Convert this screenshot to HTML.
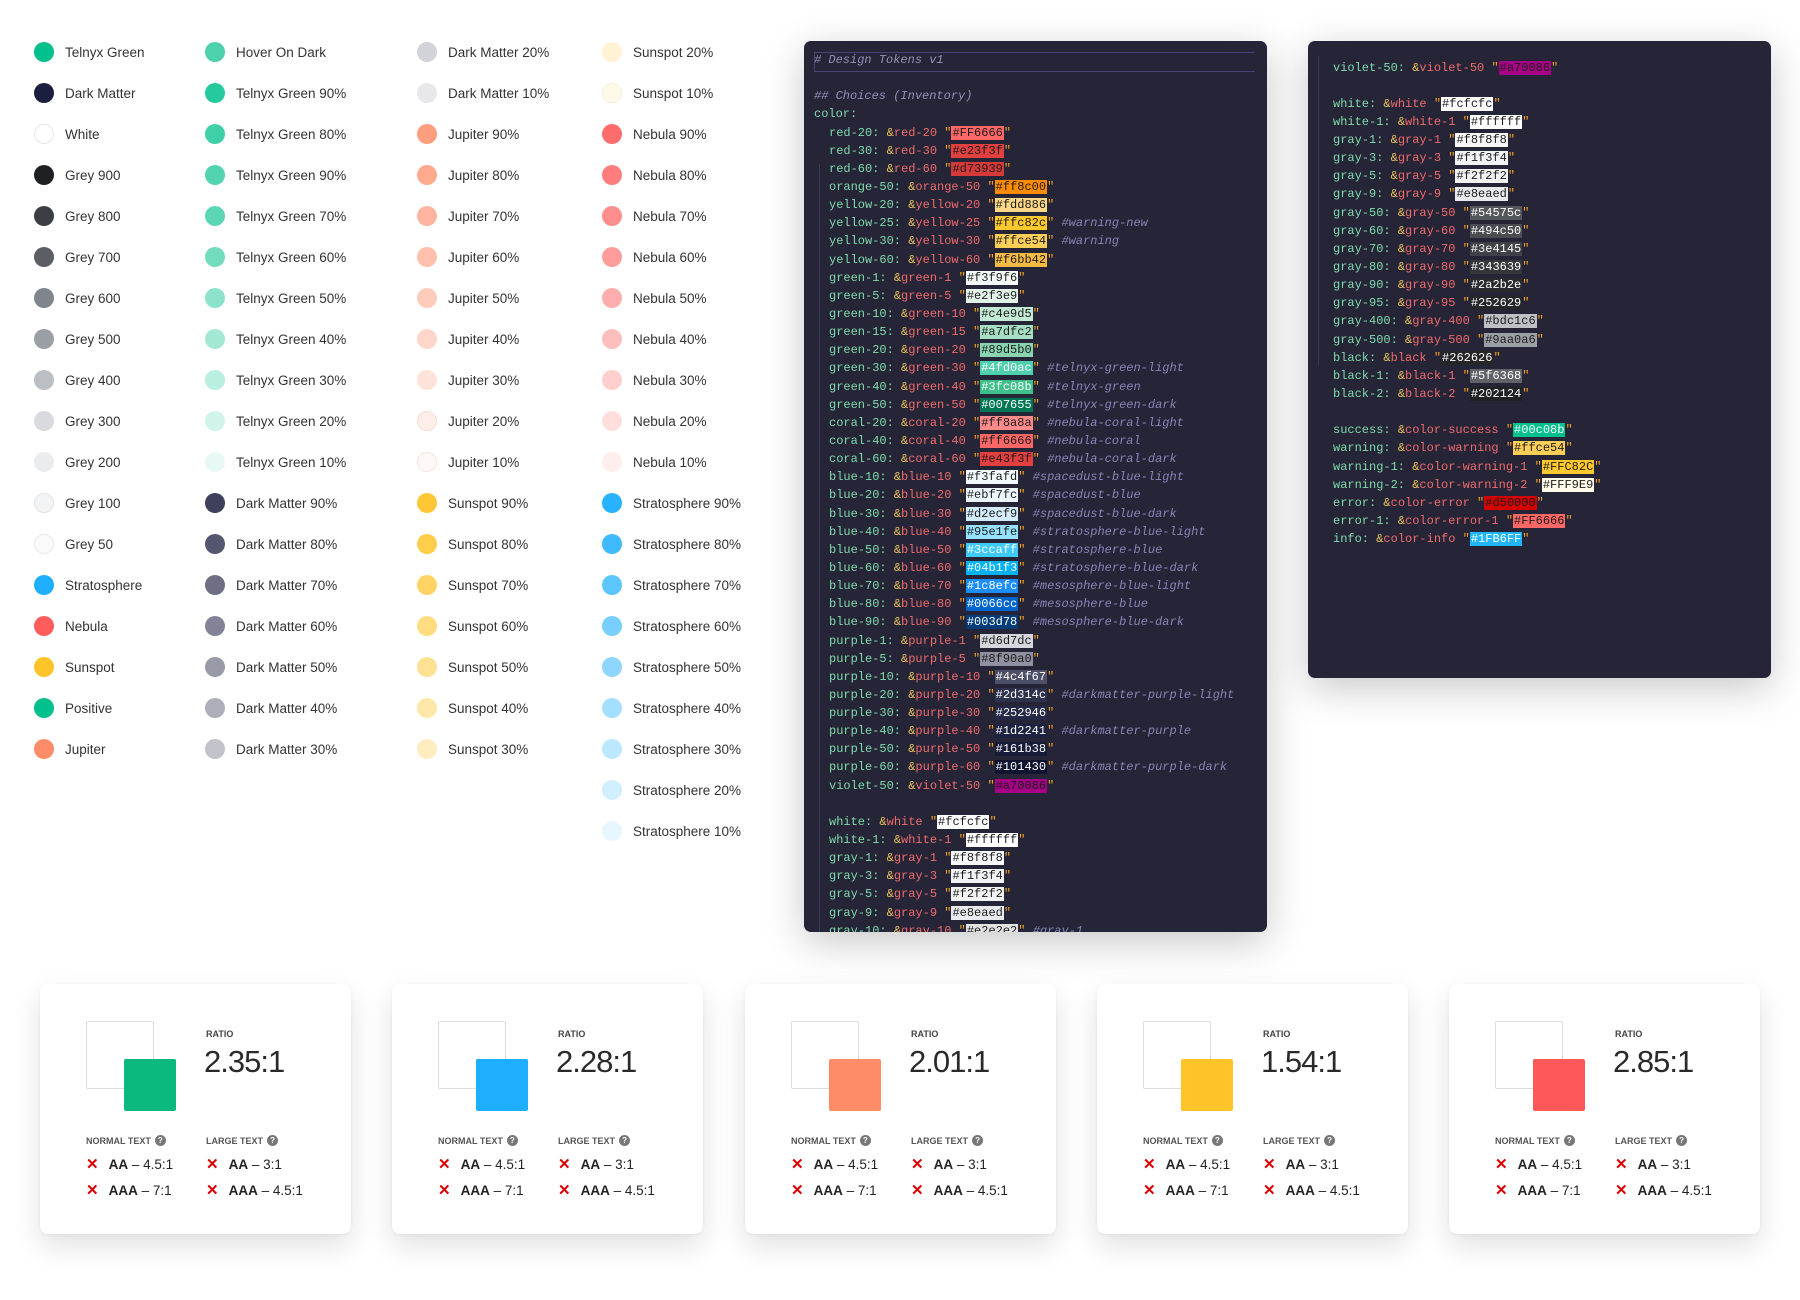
<!DOCTYPE html>
<html><head><meta charset="utf-8"><style>
*{margin:0;padding:0;box-sizing:border-box}
body{width:1800px;height:1300px;background:#fff;position:relative;overflow:hidden;font-family:"Liberation Sans",sans-serif}
.sw{position:absolute;height:20px;display:flex;align-items:center;font-size:13.5px;color:#333;white-space:nowrap}
.sw i{display:inline-block;width:20px;height:20px;border-radius:50%;margin-right:11px;flex:none}
.panel{position:absolute;background:#262437;border-radius:7px;box-shadow:0 10px 40px rgba(0,0,0,.22);overflow:hidden;font-family:"Liberation Mono",monospace;font-size:12px;line-height:18.15px;color:#7ddcab;white-space:nowrap}
.l{height:18.15px}
.k{color:#7ddcab}.a{color:#e8c25a}.n{color:#f06b6b}.q{color:#f5a623}
.h{color:#1c1c1c;padding:0 1px}
.w{color:#fff}
.c{color:#8a85b8;font-style:italic}
.hd{color:#9690b8;font-style:italic}
.card{position:absolute;top:984px;width:311px;height:250px;background:#fff;border-radius:8px;box-shadow:0 12px 28px rgba(0,0,0,.12),0 1px 3px rgba(0,0,0,.05)}
.card .wb{position:absolute;left:46px;top:37px;width:68px;height:68px;border:1px solid #ddd;border-radius:2px;background:#fff}
.card .cb{position:absolute;left:84px;top:75px;width:52px;height:52px;border-radius:2px}
.card .rl{position:absolute;left:166px;top:45px;font-size:9px;font-weight:bold;color:#444}
.card .rv{position:absolute;left:164px;top:60px;font-size:31px;color:#2a2a2a;letter-spacing:-1px}
.card .lb{position:absolute;top:151px;font-size:9px;font-weight:bold;color:#555;display:flex;align-items:center}
.card .lb b{display:inline-block;width:11px;height:11px;border-radius:50%;background:#777;color:#fff;font-size:8px;text-align:center;line-height:11px;margin-left:4px}
.card .r{position:absolute;font-size:13.5px;color:#222;white-space:nowrap}
.card .r s{text-decoration:none;color:#d00;font-weight:bold;font-size:15px;margin-right:10px}
.card .r span{font-weight:bold}
</style></head><body>

<div class="sw" style="left:34px;top:42px"><i style="background:#00c08b"></i>Telnyx Green</div>
<div class="sw" style="left:34px;top:83px"><i style="background:#1c1e3f"></i>Dark Matter</div>
<div class="sw" style="left:34px;top:124px"><i style="background:#fff;border:1px solid #e6e6e6"></i>White</div>
<div class="sw" style="left:34px;top:165px"><i style="background:#1f2024"></i>Grey 900</div>
<div class="sw" style="left:34px;top:206px"><i style="background:#3b3e44"></i>Grey 800</div>
<div class="sw" style="left:34px;top:247px"><i style="background:#5b5e64"></i>Grey 700</div>
<div class="sw" style="left:34px;top:288px"><i style="background:#80848c"></i>Grey 600</div>
<div class="sw" style="left:34px;top:329px"><i style="background:#9a9ea5"></i>Grey 500</div>
<div class="sw" style="left:34px;top:370px"><i style="background:#bbbec3"></i>Grey 400</div>
<div class="sw" style="left:34px;top:411px"><i style="background:#d8dade"></i>Grey 300</div>
<div class="sw" style="left:34px;top:452px"><i style="background:#ebecee"></i>Grey 200</div>
<div class="sw" style="left:34px;top:493px"><i style="background:#f3f4f5;border:1px solid #e4e4e4"></i>Grey 100</div>
<div class="sw" style="left:34px;top:534px"><i style="background:#fafafa;border:1px solid #e8e8e8"></i>Grey 50</div>
<div class="sw" style="left:34px;top:575px"><i style="background:#1eaeff"></i>Stratosphere</div>
<div class="sw" style="left:34px;top:616px"><i style="background:#ff5c5c"></i>Nebula</div>
<div class="sw" style="left:34px;top:657px"><i style="background:#ffc42a"></i>Sunspot</div>
<div class="sw" style="left:34px;top:698px"><i style="background:#00c08b"></i>Positive</div>
<div class="sw" style="left:34px;top:739px"><i style="background:#ff8c69"></i>Jupiter</div>

<div class="sw" style="left:205px;top:42px"><i style="background:#4dd0ac"></i>Hover On Dark</div>
<div class="sw" style="left:205px;top:83px"><i style="background:rgba(0,192,139,.85)"></i>Telnyx Green 90%</div>
<div class="sw" style="left:205px;top:124px"><i style="background:rgba(0,192,139,.75)"></i>Telnyx Green 80%</div>
<div class="sw" style="left:205px;top:165px"><i style="background:rgba(0,192,139,.68)"></i>Telnyx Green 90%</div>
<div class="sw" style="left:205px;top:206px"><i style="background:rgba(0,192,139,.64)"></i>Telnyx Green 70%</div>
<div class="sw" style="left:205px;top:247px"><i style="background:rgba(0,192,139,.55)"></i>Telnyx Green 60%</div>
<div class="sw" style="left:205px;top:288px"><i style="background:rgba(0,192,139,.45)"></i>Telnyx Green 50%</div>
<div class="sw" style="left:205px;top:329px"><i style="background:rgba(0,192,139,.36)"></i>Telnyx Green 40%</div>
<div class="sw" style="left:205px;top:370px"><i style="background:rgba(0,192,139,.27)"></i>Telnyx Green 30%</div>
<div class="sw" style="left:205px;top:411px"><i style="background:rgba(0,192,139,.18)"></i>Telnyx Green 20%</div>
<div class="sw" style="left:205px;top:452px"><i style="background:rgba(0,192,139,.09)"></i>Telnyx Green 10%</div>
<div class="sw" style="left:205px;top:493px"><i style="background:rgba(28,30,63,.85)"></i>Dark Matter 90%</div>
<div class="sw" style="left:205px;top:534px"><i style="background:rgba(28,30,63,.75)"></i>Dark Matter 80%</div>
<div class="sw" style="left:205px;top:575px"><i style="background:rgba(28,30,63,.64)"></i>Dark Matter 70%</div>
<div class="sw" style="left:205px;top:616px"><i style="background:rgba(28,30,63,.55)"></i>Dark Matter 60%</div>
<div class="sw" style="left:205px;top:657px"><i style="background:rgba(28,30,63,.45)"></i>Dark Matter 50%</div>
<div class="sw" style="left:205px;top:698px"><i style="background:rgba(28,30,63,.36)"></i>Dark Matter 40%</div>
<div class="sw" style="left:205px;top:739px"><i style="background:rgba(28,30,63,.27)"></i>Dark Matter 30%</div>

<div class="sw" style="left:417px;top:42px"><i style="background:rgba(28,30,63,.2)"></i>Dark Matter 20%</div>
<div class="sw" style="left:417px;top:83px"><i style="background:rgba(28,30,63,.1)"></i>Dark Matter 10%</div>
<div class="sw" style="left:417px;top:124px"><i style="background:rgba(255,140,105,.85)"></i>Jupiter 90%</div>
<div class="sw" style="left:417px;top:165px"><i style="background:rgba(255,140,105,.75)"></i>Jupiter 80%</div>
<div class="sw" style="left:417px;top:206px"><i style="background:rgba(255,140,105,.64)"></i>Jupiter 70%</div>
<div class="sw" style="left:417px;top:247px"><i style="background:rgba(255,140,105,.55)"></i>Jupiter 60%</div>
<div class="sw" style="left:417px;top:288px"><i style="background:rgba(255,140,105,.45)"></i>Jupiter 50%</div>
<div class="sw" style="left:417px;top:329px"><i style="background:rgba(255,140,105,.36)"></i>Jupiter 40%</div>
<div class="sw" style="left:417px;top:370px"><i style="background:rgba(255,140,105,.25)"></i>Jupiter 30%</div>
<div class="sw" style="left:417px;top:411px"><i style="background:rgba(255,140,105,.15);border:1px solid #f6ddd5"></i>Jupiter 20%</div>
<div class="sw" style="left:417px;top:452px"><i style="background:rgba(255,140,105,.06);border:1px solid #f6e4df"></i>Jupiter 10%</div>
<div class="sw" style="left:417px;top:493px"><i style="background:rgba(255,196,42,.95)"></i>Sunspot 90%</div>
<div class="sw" style="left:417px;top:534px"><i style="background:rgba(255,196,42,.85)"></i>Sunspot 80%</div>
<div class="sw" style="left:417px;top:575px"><i style="background:rgba(255,196,42,.72)"></i>Sunspot 70%</div>
<div class="sw" style="left:417px;top:616px"><i style="background:rgba(255,196,42,.6)"></i>Sunspot 60%</div>
<div class="sw" style="left:417px;top:657px"><i style="background:rgba(255,196,42,.5)"></i>Sunspot 50%</div>
<div class="sw" style="left:417px;top:698px"><i style="background:rgba(255,196,42,.4)"></i>Sunspot 40%</div>
<div class="sw" style="left:417px;top:739px"><i style="background:rgba(255,196,42,.3)"></i>Sunspot 30%</div>

<div class="sw" style="left:602px;top:42px"><i style="background:rgba(255,196,42,.2)"></i>Sunspot 20%</div>
<div class="sw" style="left:602px;top:83px"><i style="background:rgba(255,196,42,.1);border:1px solid #f4eed8"></i>Sunspot 10%</div>
<div class="sw" style="left:602px;top:124px"><i style="background:rgba(255,92,92,.9)"></i>Nebula 90%</div>
<div class="sw" style="left:602px;top:165px"><i style="background:rgba(255,92,92,.8)"></i>Nebula 80%</div>
<div class="sw" style="left:602px;top:206px"><i style="background:rgba(255,92,92,.7)"></i>Nebula 70%</div>
<div class="sw" style="left:602px;top:247px"><i style="background:rgba(255,92,92,.6)"></i>Nebula 60%</div>
<div class="sw" style="left:602px;top:288px"><i style="background:rgba(255,92,92,.5)"></i>Nebula 50%</div>
<div class="sw" style="left:602px;top:329px"><i style="background:rgba(255,92,92,.4)"></i>Nebula 40%</div>
<div class="sw" style="left:602px;top:370px"><i style="background:rgba(255,92,92,.3)"></i>Nebula 30%</div>
<div class="sw" style="left:602px;top:411px"><i style="background:rgba(255,92,92,.2)"></i>Nebula 20%</div>
<div class="sw" style="left:602px;top:452px"><i style="background:rgba(255,92,92,.1)"></i>Nebula 10%</div>
<div class="sw" style="left:602px;top:493px"><i style="background:rgba(30,174,255,.95)"></i>Stratosphere 90%</div>
<div class="sw" style="left:602px;top:534px"><i style="background:rgba(30,174,255,.85)"></i>Stratosphere 80%</div>
<div class="sw" style="left:602px;top:575px"><i style="background:rgba(30,174,255,.72)"></i>Stratosphere 70%</div>
<div class="sw" style="left:602px;top:616px"><i style="background:rgba(30,174,255,.6)"></i>Stratosphere 60%</div>
<div class="sw" style="left:602px;top:657px"><i style="background:rgba(30,174,255,.5)"></i>Stratosphere 50%</div>
<div class="sw" style="left:602px;top:698px"><i style="background:rgba(30,174,255,.4)"></i>Stratosphere 40%</div>
<div class="sw" style="left:602px;top:739px"><i style="background:rgba(30,174,255,.3)"></i>Stratosphere 30%</div>
<div class="sw" style="left:602px;top:780px"><i style="background:rgba(30,174,255,.2)"></i>Stratosphere 20%</div>
<div class="sw" style="left:602px;top:821px"><i style="background:rgba(30,174,255,.1)"></i>Stratosphere 10%</div>

<div class="panel" style="left:804px;top:41px;width:463px;height:891px;padding:10px 0 0 10px">
<div style="position:absolute;left:10px;top:11px;width:441px;height:20px;border-top:1px solid #4a4372;border-bottom:1px solid #4a4372;border-left:1px solid #4a4372"></div>
<div style="position:absolute;left:15px;top:123px;width:1px;height:780px;background:#3a3850"></div>
<div class="l hd"># Design Tokens v1</div>
<div class="l"></div>
<div class="l hd">## Choices (Inventory)</div>
<div class="l k">color:</div>
<div style="padding-left:15px">
<div class="l"><span class="k">red-20:</span> <span class="a">&amp;<span class="n">red-20</span></span> <span class="q">"</span><span class="h" style="background:#FF6666">#FF6666</span><span class="q">"</span></div>
<div class="l"><span class="k">red-30:</span> <span class="a">&amp;<span class="n">red-30</span></span> <span class="q">"</span><span class="h" style="background:#e23f3f">#e23f3f</span><span class="q">"</span></div>
<div class="l"><span class="k">red-60:</span> <span class="a">&amp;<span class="n">red-60</span></span> <span class="q">"</span><span class="h" style="background:#d73939">#d73939</span><span class="q">"</span></div>
<div class="l"><span class="k">orange-50:</span> <span class="a">&amp;<span class="n">orange-50</span></span> <span class="q">"</span><span class="h" style="background:#ff8c00">#ff8c00</span><span class="q">"</span></div>
<div class="l"><span class="k">yellow-20:</span> <span class="a">&amp;<span class="n">yellow-20</span></span> <span class="q">"</span><span class="h" style="background:#fdd886">#fdd886</span><span class="q">"</span></div>
<div class="l"><span class="k">yellow-25:</span> <span class="a">&amp;<span class="n">yellow-25</span></span> <span class="q">"</span><span class="h" style="background:#ffc82c">#ffc82c</span><span class="q">"</span> <span class="c">#warning-new</span></div>
<div class="l"><span class="k">yellow-30:</span> <span class="a">&amp;<span class="n">yellow-30</span></span> <span class="q">"</span><span class="h" style="background:#ffce54">#ffce54</span><span class="q">"</span> <span class="c">#warning</span></div>
<div class="l"><span class="k">yellow-60:</span> <span class="a">&amp;<span class="n">yellow-60</span></span> <span class="q">"</span><span class="h" style="background:#f6bb42">#f6bb42</span><span class="q">"</span></div>
<div class="l"><span class="k">green-1:</span> <span class="a">&amp;<span class="n">green-1</span></span> <span class="q">"</span><span class="h" style="background:#f3f9f6">#f3f9f6</span><span class="q">"</span></div>
<div class="l"><span class="k">green-5:</span> <span class="a">&amp;<span class="n">green-5</span></span> <span class="q">"</span><span class="h" style="background:#e2f3e9">#e2f3e9</span><span class="q">"</span></div>
<div class="l"><span class="k">green-10:</span> <span class="a">&amp;<span class="n">green-10</span></span> <span class="q">"</span><span class="h" style="background:#c4e9d5">#c4e9d5</span><span class="q">"</span></div>
<div class="l"><span class="k">green-15:</span> <span class="a">&amp;<span class="n">green-15</span></span> <span class="q">"</span><span class="h" style="background:#a7dfc2">#a7dfc2</span><span class="q">"</span></div>
<div class="l"><span class="k">green-20:</span> <span class="a">&amp;<span class="n">green-20</span></span> <span class="q">"</span><span class="h" style="background:#89d5b0">#89d5b0</span><span class="q">"</span></div>
<div class="l"><span class="k">green-30:</span> <span class="a">&amp;<span class="n">green-30</span></span> <span class="q">"</span><span class="h w" style="background:#4fd0ac">#4fd0ac</span><span class="q">"</span> <span class="c">#telnyx-green-light</span></div>
<div class="l"><span class="k">green-40:</span> <span class="a">&amp;<span class="n">green-40</span></span> <span class="q">"</span><span class="h w" style="background:#3fc08b">#3fc08b</span><span class="q">"</span> <span class="c">#telnyx-green</span></div>
<div class="l"><span class="k">green-50:</span> <span class="a">&amp;<span class="n">green-50</span></span> <span class="q">"</span><span class="h w" style="background:#007655">#007655</span><span class="q">"</span> <span class="c">#telnyx-green-dark</span></div>
<div class="l"><span class="k">coral-20:</span> <span class="a">&amp;<span class="n">coral-20</span></span> <span class="q">"</span><span class="h" style="background:#ff8a8a">#ff8a8a</span><span class="q">"</span> <span class="c">#nebula-coral-light</span></div>
<div class="l"><span class="k">coral-40:</span> <span class="a">&amp;<span class="n">coral-40</span></span> <span class="q">"</span><span class="h" style="background:#ff6666">#ff6666</span><span class="q">"</span> <span class="c">#nebula-coral</span></div>
<div class="l"><span class="k">coral-60:</span> <span class="a">&amp;<span class="n">coral-60</span></span> <span class="q">"</span><span class="h" style="background:#e43f3f">#e43f3f</span><span class="q">"</span> <span class="c">#nebula-coral-dark</span></div>
<div class="l"><span class="k">blue-10:</span> <span class="a">&amp;<span class="n">blue-10</span></span> <span class="q">"</span><span class="h" style="background:#f3fafd">#f3fafd</span><span class="q">"</span> <span class="c">#spacedust-blue-light</span></div>
<div class="l"><span class="k">blue-20:</span> <span class="a">&amp;<span class="n">blue-20</span></span> <span class="q">"</span><span class="h" style="background:#ebf7fc">#ebf7fc</span><span class="q">"</span> <span class="c">#spacedust-blue</span></div>
<div class="l"><span class="k">blue-30:</span> <span class="a">&amp;<span class="n">blue-30</span></span> <span class="q">"</span><span class="h" style="background:#d2ecf9">#d2ecf9</span><span class="q">"</span> <span class="c">#spacedust-blue-dark</span></div>
<div class="l"><span class="k">blue-40:</span> <span class="a">&amp;<span class="n">blue-40</span></span> <span class="q">"</span><span class="h" style="background:#95e1fe">#95e1fe</span><span class="q">"</span> <span class="c">#stratosphere-blue-light</span></div>
<div class="l"><span class="k">blue-50:</span> <span class="a">&amp;<span class="n">blue-50</span></span> <span class="q">"</span><span class="h w" style="background:#3ccaff">#3ccaff</span><span class="q">"</span> <span class="c">#stratosphere-blue</span></div>
<div class="l"><span class="k">blue-60:</span> <span class="a">&amp;<span class="n">blue-60</span></span> <span class="q">"</span><span class="h w" style="background:#04b1f3">#04b1f3</span><span class="q">"</span> <span class="c">#stratosphere-blue-dark</span></div>
<div class="l"><span class="k">blue-70:</span> <span class="a">&amp;<span class="n">blue-70</span></span> <span class="q">"</span><span class="h w" style="background:#1c8efc">#1c8efc</span><span class="q">"</span> <span class="c">#mesosphere-blue-light</span></div>
<div class="l"><span class="k">blue-80:</span> <span class="a">&amp;<span class="n">blue-80</span></span> <span class="q">"</span><span class="h w" style="background:#0066cc">#0066cc</span><span class="q">"</span> <span class="c">#mesosphere-blue</span></div>
<div class="l"><span class="k">blue-90:</span> <span class="a">&amp;<span class="n">blue-90</span></span> <span class="q">"</span><span class="h w" style="background:#003d78">#003d78</span><span class="q">"</span> <span class="c">#mesosphere-blue-dark</span></div>
<div class="l"><span class="k">purple-1:</span> <span class="a">&amp;<span class="n">purple-1</span></span> <span class="q">"</span><span class="h" style="background:#d6d7dc">#d6d7dc</span><span class="q">"</span></div>
<div class="l"><span class="k">purple-5:</span> <span class="a">&amp;<span class="n">purple-5</span></span> <span class="q">"</span><span class="h" style="background:#8f90a0">#8f90a0</span><span class="q">"</span></div>
<div class="l"><span class="k">purple-10:</span> <span class="a">&amp;<span class="n">purple-10</span></span> <span class="q">"</span><span class="h w" style="background:#4c4f67">#4c4f67</span><span class="q">"</span></div>
<div class="l"><span class="k">purple-20:</span> <span class="a">&amp;<span class="n">purple-20</span></span> <span class="q">"</span><span class="h w" style="background:#2d314c">#2d314c</span><span class="q">"</span> <span class="c">#darkmatter-purple-light</span></div>
<div class="l"><span class="k">purple-30:</span> <span class="a">&amp;<span class="n">purple-30</span></span> <span class="q">"</span><span class="h w" style="background:#252946">#252946</span><span class="q">"</span></div>
<div class="l"><span class="k">purple-40:</span> <span class="a">&amp;<span class="n">purple-40</span></span> <span class="q">"</span><span class="h w" style="background:#1d2241">#1d2241</span><span class="q">"</span> <span class="c">#darkmatter-purple</span></div>
<div class="l"><span class="k">purple-50:</span> <span class="a">&amp;<span class="n">purple-50</span></span> <span class="q">"</span><span class="h w" style="background:#161b38">#161b38</span><span class="q">"</span></div>
<div class="l"><span class="k">purple-60:</span> <span class="a">&amp;<span class="n">purple-60</span></span> <span class="q">"</span><span class="h w" style="background:#101430">#101430</span><span class="q">"</span> <span class="c">#darkmatter-purple-dark</span></div>
<div class="l"><span class="k">violet-50:</span> <span class="a">&amp;<span class="n">violet-50</span></span> <span class="q">"</span><span class="h" style="background:#a70086">#a70086</span><span class="q">"</span></div>
<div class="l"></div>
<div class="l"><span class="k">white:</span> <span class="a">&amp;<span class="n">white</span></span> <span class="q">"</span><span class="h" style="background:#fcfcfc">#fcfcfc</span><span class="q">"</span></div>
<div class="l"><span class="k">white-1:</span> <span class="a">&amp;<span class="n">white-1</span></span> <span class="q">"</span><span class="h" style="background:#ffffff">#ffffff</span><span class="q">"</span></div>
<div class="l"><span class="k">gray-1:</span> <span class="a">&amp;<span class="n">gray-1</span></span> <span class="q">"</span><span class="h" style="background:#f8f8f8">#f8f8f8</span><span class="q">"</span></div>
<div class="l"><span class="k">gray-3:</span> <span class="a">&amp;<span class="n">gray-3</span></span> <span class="q">"</span><span class="h" style="background:#f1f3f4">#f1f3f4</span><span class="q">"</span></div>
<div class="l"><span class="k">gray-5:</span> <span class="a">&amp;<span class="n">gray-5</span></span> <span class="q">"</span><span class="h" style="background:#f2f2f2">#f2f2f2</span><span class="q">"</span></div>
<div class="l"><span class="k">gray-9:</span> <span class="a">&amp;<span class="n">gray-9</span></span> <span class="q">"</span><span class="h" style="background:#e8eaed">#e8eaed</span><span class="q">"</span></div>
<div class="l"><span class="k">gray-10:</span> <span class="a">&amp;<span class="n">gray-10</span></span> <span class="q">"</span><span class="h" style="background:#e2e2e2">#e2e2e2</span><span class="q">"</span> <span class="c">#gray-1</span></div>
</div>
</div>

<div class="panel" style="left:1308px;top:41px;width:463px;height:637px;padding:17.5px 0 0 25px">
<div style="position:absolute;left:10px;top:15px;width:1px;height:310px;background:#3a3850"></div>
<div class="l"><span class="k">violet-50:</span> <span class="a">&amp;<span class="n">violet-50</span></span> <span class="q">"</span><span class="h" style="background:#a70086">#a70086</span><span class="q">"</span></div>
<div class="l"></div>
<div class="l"><span class="k">white:</span> <span class="a">&amp;<span class="n">white</span></span> <span class="q">"</span><span class="h" style="background:#fcfcfc">#fcfcfc</span><span class="q">"</span></div>
<div class="l"><span class="k">white-1:</span> <span class="a">&amp;<span class="n">white-1</span></span> <span class="q">"</span><span class="h" style="background:#ffffff">#ffffff</span><span class="q">"</span></div>
<div class="l"><span class="k">gray-1:</span> <span class="a">&amp;<span class="n">gray-1</span></span> <span class="q">"</span><span class="h" style="background:#f8f8f8">#f8f8f8</span><span class="q">"</span></div>
<div class="l"><span class="k">gray-3:</span> <span class="a">&amp;<span class="n">gray-3</span></span> <span class="q">"</span><span class="h" style="background:#f1f3f4">#f1f3f4</span><span class="q">"</span></div>
<div class="l"><span class="k">gray-5:</span> <span class="a">&amp;<span class="n">gray-5</span></span> <span class="q">"</span><span class="h" style="background:#f2f2f2">#f2f2f2</span><span class="q">"</span></div>
<div class="l"><span class="k">gray-9:</span> <span class="a">&amp;<span class="n">gray-9</span></span> <span class="q">"</span><span class="h" style="background:#e8eaed">#e8eaed</span><span class="q">"</span></div>
<div class="l"><span class="k">gray-50:</span> <span class="a">&amp;<span class="n">gray-50</span></span> <span class="q">"</span><span class="h w" style="background:#54575c">#54575c</span><span class="q">"</span></div>
<div class="l"><span class="k">gray-60:</span> <span class="a">&amp;<span class="n">gray-60</span></span> <span class="q">"</span><span class="h w" style="background:#494c50">#494c50</span><span class="q">"</span></div>
<div class="l"><span class="k">gray-70:</span> <span class="a">&amp;<span class="n">gray-70</span></span> <span class="q">"</span><span class="h w" style="background:#3e4145">#3e4145</span><span class="q">"</span></div>
<div class="l"><span class="k">gray-80:</span> <span class="a">&amp;<span class="n">gray-80</span></span> <span class="q">"</span><span class="h w" style="background:#343639">#343639</span><span class="q">"</span></div>
<div class="l"><span class="k">gray-90:</span> <span class="a">&amp;<span class="n">gray-90</span></span> <span class="q">"</span><span class="h w" style="background:#2a2b2e">#2a2b2e</span><span class="q">"</span></div>
<div class="l"><span class="k">gray-95:</span> <span class="a">&amp;<span class="n">gray-95</span></span> <span class="q">"</span><span class="h w" style="background:#252629">#252629</span><span class="q">"</span></div>
<div class="l"><span class="k">gray-400:</span> <span class="a">&amp;<span class="n">gray-400</span></span> <span class="q">"</span><span class="h" style="background:#bdc1c6">#bdc1c6</span><span class="q">"</span></div>
<div class="l"><span class="k">gray-500:</span> <span class="a">&amp;<span class="n">gray-500</span></span> <span class="q">"</span><span class="h" style="background:#9aa0a6">#9aa0a6</span><span class="q">"</span></div>
<div class="l"><span class="k">black:</span> <span class="a">&amp;<span class="n">black</span></span> <span class="q">"</span><span class="h w" style="background:#262626">#262626</span><span class="q">"</span></div>
<div class="l"><span class="k">black-1:</span> <span class="a">&amp;<span class="n">black-1</span></span> <span class="q">"</span><span class="h w" style="background:#5f6368">#5f6368</span><span class="q">"</span></div>
<div class="l"><span class="k">black-2:</span> <span class="a">&amp;<span class="n">black-2</span></span> <span class="q">"</span><span class="h w" style="background:#202124">#202124</span><span class="q">"</span></div>
<div class="l"></div>
<div class="l"><span class="k">success:</span> <span class="a">&amp;<span class="n">color-success</span></span> <span class="q">"</span><span class="h w" style="background:#00c08b">#00c08b</span><span class="q">"</span></div>
<div class="l"><span class="k">warning:</span> <span class="a">&amp;<span class="n">color-warning</span></span> <span class="q">"</span><span class="h" style="background:#ffce54">#ffce54</span><span class="q">"</span></div>
<div class="l"><span class="k">warning-1:</span> <span class="a">&amp;<span class="n">color-warning-1</span></span> <span class="q">"</span><span class="h" style="background:#FFC82C">#FFC82C</span><span class="q">"</span></div>
<div class="l"><span class="k">warning-2:</span> <span class="a">&amp;<span class="n">color-warning-2</span></span> <span class="q">"</span><span class="h" style="background:#FFF9E9">#FFF9E9</span><span class="q">"</span></div>
<div class="l"><span class="k">error:</span> <span class="a">&amp;<span class="n">color-error</span></span> <span class="q">"</span><span class="h" style="background:#d50000">#d50000</span><span class="q">"</span></div>
<div class="l"><span class="k">error-1:</span> <span class="a">&amp;<span class="n">color-error-1</span></span> <span class="q">"</span><span class="h" style="background:#FF6666">#FF6666</span><span class="q">"</span></div>
<div class="l"><span class="k">info:</span> <span class="a">&amp;<span class="n">color-info</span></span> <span class="q">"</span><span class="h w" style="background:#1FB6FF">#1FB6FF</span><span class="q">"</span></div>
</div>

<div class="card" style="left:40px"><div class="wb"></div><div class="cb" style="background:#0bb97e"></div><div class="rl">RATIO</div><div class="rv">2.35:1</div>
<div class="lb" style="left:46px">NORMAL TEXT<b>?</b></div><div class="lb" style="left:166px">LARGE TEXT<b>?</b></div>
<div class="r" style="left:46px;top:171px"><s>✕</s><span>AA</span> – 4.5:1</div><div class="r" style="left:46px;top:197px"><s>✕</s><span>AAA</span> – 7:1</div>
<div class="r" style="left:166px;top:171px"><s>✕</s><span>AA</span> – 3:1</div><div class="r" style="left:166px;top:197px"><s>✕</s><span>AAA</span> – 4.5:1</div></div>

<div class="card" style="left:392px"><div class="wb"></div><div class="cb" style="background:#1eaeff"></div><div class="rl">RATIO</div><div class="rv">2.28:1</div>
<div class="lb" style="left:46px">NORMAL TEXT<b>?</b></div><div class="lb" style="left:166px">LARGE TEXT<b>?</b></div>
<div class="r" style="left:46px;top:171px"><s>✕</s><span>AA</span> – 4.5:1</div><div class="r" style="left:46px;top:197px"><s>✕</s><span>AAA</span> – 7:1</div>
<div class="r" style="left:166px;top:171px"><s>✕</s><span>AA</span> – 3:1</div><div class="r" style="left:166px;top:197px"><s>✕</s><span>AAA</span> – 4.5:1</div></div>

<div class="card" style="left:745px"><div class="wb"></div><div class="cb" style="background:#ff8c69"></div><div class="rl">RATIO</div><div class="rv">2.01:1</div>
<div class="lb" style="left:46px">NORMAL TEXT<b>?</b></div><div class="lb" style="left:166px">LARGE TEXT<b>?</b></div>
<div class="r" style="left:46px;top:171px"><s>✕</s><span>AA</span> – 4.5:1</div><div class="r" style="left:46px;top:197px"><s>✕</s><span>AAA</span> – 7:1</div>
<div class="r" style="left:166px;top:171px"><s>✕</s><span>AA</span> – 3:1</div><div class="r" style="left:166px;top:197px"><s>✕</s><span>AAA</span> – 4.5:1</div></div>

<div class="card" style="left:1097px"><div class="wb"></div><div class="cb" style="background:#ffc42a"></div><div class="rl">RATIO</div><div class="rv">1.54:1</div>
<div class="lb" style="left:46px">NORMAL TEXT<b>?</b></div><div class="lb" style="left:166px">LARGE TEXT<b>?</b></div>
<div class="r" style="left:46px;top:171px"><s>✕</s><span>AA</span> – 4.5:1</div><div class="r" style="left:46px;top:197px"><s>✕</s><span>AAA</span> – 7:1</div>
<div class="r" style="left:166px;top:171px"><s>✕</s><span>AA</span> – 3:1</div><div class="r" style="left:166px;top:197px"><s>✕</s><span>AAA</span> – 4.5:1</div></div>

<div class="card" style="left:1449px"><div class="wb"></div><div class="cb" style="background:#ff5858"></div><div class="rl">RATIO</div><div class="rv">2.85:1</div>
<div class="lb" style="left:46px">NORMAL TEXT<b>?</b></div><div class="lb" style="left:166px">LARGE TEXT<b>?</b></div>
<div class="r" style="left:46px;top:171px"><s>✕</s><span>AA</span> – 4.5:1</div><div class="r" style="left:46px;top:197px"><s>✕</s><span>AAA</span> – 7:1</div>
<div class="r" style="left:166px;top:171px"><s>✕</s><span>AA</span> – 3:1</div><div class="r" style="left:166px;top:197px"><s>✕</s><span>AAA</span> – 4.5:1</div></div>

</body></html>
